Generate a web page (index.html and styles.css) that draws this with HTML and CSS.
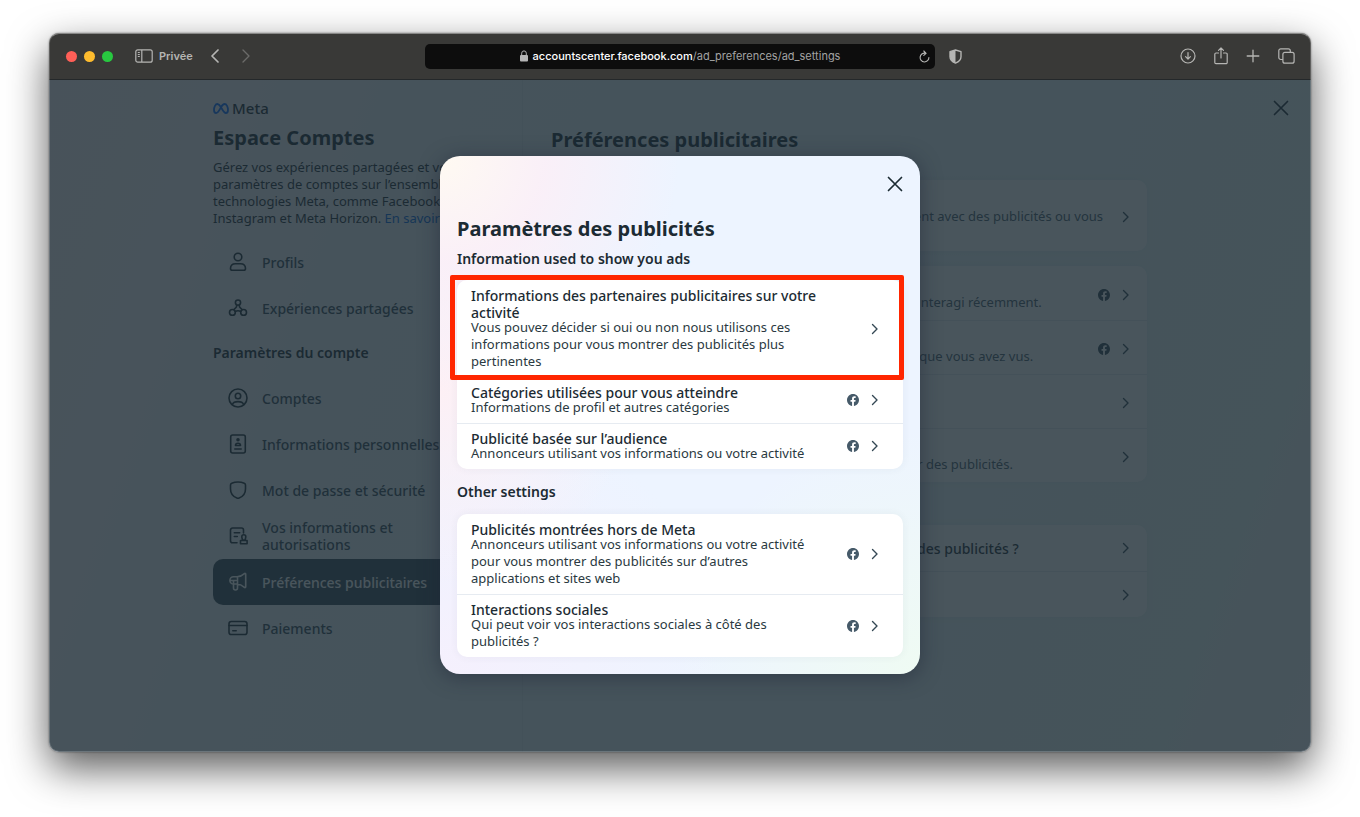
FILE: index.html
```
<!DOCTYPE html>
<html lang="fr">

<head>
  <meta charset="utf-8">
  <title>Préférences publicitaires</title>
  <meta name="viewport" content="width=device-width, initial-scale=1">
  <link rel="stylesheet" href="styles.css">
</head>

<body>

  <!-- Shared icons -->
  <svg class="sprite" aria-hidden="true">
    <symbol id="chevron" viewBox="0 0 10 12">
      <path d="M2.5 1.5 7 6 2.5 10.5" fill="none" stroke="currentColor" stroke-width="1.4" stroke-linecap="round" stroke-linejoin="round" />
    </symbol>
    <symbol id="cross" viewBox="0 0 16 16">
      <path d="M1.5 1.5l13 13M14.5 1.5l-13 13" fill="none" stroke="currentColor" stroke-width="1.7" stroke-linecap="round" />
    </symbol>
    <symbol id="facebook" viewBox="0 0 24 24">
      <path fill="currentColor" d="M24 12.07C24 5.4 18.63 0 12 0S0 5.4 0 12.07C0 18.1 4.39 23.1 10.13 24v-8.44H7.08v-3.49h3.05V9.41c0-3.02 1.79-4.69 4.53-4.69 1.31 0 2.68.24 2.68.24v2.97h-1.51c-1.49 0-1.95.93-1.95 1.88v2.26h3.32l-.53 3.49h-2.79V24C19.61 23.1 24 18.1 24 12.07z" />
    </symbol>
  </svg>

  <div class="window">

    <!-- Browser toolbar -->
    <header class="toolbar">
      <div class="toolbar-left">
        <div class="lights">
          <span class="light red"></span>
          <span class="light yellow"></span>
          <span class="light green"></span>
        </div>
        <button class="tool private" type="button">
          <svg width="18" height="14" viewBox="0 0 18 14" fill="none" stroke="currentColor">
            <rect x="0.8" y="0.8" width="16.4" height="12.4" rx="2" stroke-width="1.2" />
            <path d="M6.8 1v12" stroke-width="1.2" />
            <path d="M2.8 3.5h2M2.8 5.5h2M2.8 7.5h2" stroke-width="1" />
          </svg>
          Privée
        </button>
        <button class="tool" type="button" aria-label="Précédent">
          <svg width="8" height="14" viewBox="0 0 8 14" fill="none" stroke="currentColor" stroke-width="1.7" stroke-linecap="round" stroke-linejoin="round">
            <path d="M7 1 1 7l6 6" />
          </svg>
        </button>
        <button class="tool next" type="button" aria-label="Suivant" disabled>
          <svg width="8" height="14" viewBox="0 0 8 14" fill="none" stroke="currentColor" stroke-width="1.4" stroke-linecap="round" stroke-linejoin="round">
            <path d="M1 1l6 6-6 6" />
          </svg>
        </button>
      </div>

      <div class="address">
        <button class="url" type="button">
          <svg width="8" height="12" viewBox="0 0 8 12">
            <rect x="0" y="5" width="8" height="6.6" rx="1" fill="#b5b5b5" />
            <path d="M1.7 5.5V3.2a2.3 2.3 0 0 1 4.6 0v2.3" fill="none" stroke="#b5b5b5" stroke-width="1" />
          </svg>
          <span><span class="host">accountscenter.facebook.com</span>/ad_preferences/ad_settings</span>
        </button>
        <button class="tool reload" type="button" aria-label="Recharger">
          <svg width="11" height="13" viewBox="0 0 11 13" fill="none" stroke="currentColor" stroke-width="1.1" stroke-linecap="round" stroke-linejoin="round">
            <path d="M6.2 3.2A4.4 4.4 0 1 0 9.9 7.5M4.8 1l2.3 2.3L4.8 5.4" />
          </svg>
        </button>
      </div>

      <div class="toolbar-right">
        <button class="tool" type="button" aria-label="Confidentialité">
          <svg width="13" height="15" viewBox="0 0 13 15">
            <path d="M6.5 1 12 2.7v5c0 3-2.3 5-5.5 6.4C3.3 12.7 1 10.7 1 7.7v-5z" fill="none" stroke="currentColor" stroke-width="1.4" stroke-linejoin="round" />
            <path d="M6.5 1v13.1C3.3 12.7 1 10.7 1 7.7v-5z" fill="currentColor" />
          </svg>
        </button>
        <div class="tools">
          <button class="tool" type="button" aria-label="Téléchargements">
            <svg width="16" height="16" viewBox="0 0 16 16" fill="none" stroke="currentColor" stroke-width="1.2" stroke-linecap="round" stroke-linejoin="round">
              <circle cx="8" cy="8" r="7" />
              <path d="M8 4.5v6.5M5.6 8.7 8 11.1l2.4-2.4" />
            </svg>
          </button>
          <button class="tool" type="button" aria-label="Partager">
            <svg width="14" height="18" viewBox="0 0 14 18" fill="none" stroke="currentColor" stroke-width="1.2" stroke-linecap="round" stroke-linejoin="round">
              <path d="M4.5 6H2a1.2 1.2 0 0 0-1.2 1.2v8.3A1.2 1.2 0 0 0 2 16.7h10a1.2 1.2 0 0 0 1.2-1.2V7.2A1.2 1.2 0 0 0 12 6H9.5M7 11V1M4.5 3.3 7 .8l2.5 2.5" />
            </svg>
          </button>
          <button class="tool" type="button" aria-label="Nouvel onglet">
            <svg width="14" height="14" viewBox="0 0 14 14" fill="none" stroke="currentColor" stroke-width="1.3" stroke-linecap="round">
              <path d="M7 1.2v11.6M1.2 7h11.6" />
            </svg>
          </button>
          <button class="tool" type="button" aria-label="Onglets">
            <svg width="17" height="16" viewBox="0 0 17 16" fill="none" stroke="currentColor" stroke-width="1.2" stroke-linejoin="round">
              <rect x="4.9" y="4.4" width="11.2" height="10.8" rx="2" />
              <path d="M4.9 11.5H2.8a2 2 0 0 1-2-2V2.8a2 2 0 0 1 2-2h7.5a2 2 0 0 1 2 2v1.6" />
            </svg>
          </button>
        </div>
      </div>
    </header>

    <div class="page">
      <div class="layout">

        <!-- Left column -->
        <aside class="sidebar">
          <div class="brand">
            <svg width="16" height="11" viewBox="0 0 16 11" fill="none" stroke="#0a6cff" stroke-width="1.8" stroke-linecap="round" stroke-linejoin="round">
              <path d="M8 4.2C6.7 2 5.6 1 4.4 1 2.4 1 1 4 1 7c0 1.8.8 3 2.1 3C5.3 10 6.5 6.7 8 4.2 9.2 2 10.3 1 11.6 1 13.6 1 15 4 15 7c0 1.8-.8 3-2.1 3C10.8 10 9.5 6.7 8 4.2z" />
            </svg>
            <span>Meta</span>
          </div>
          <h1 class="title">Espace Comptes</h1>
          <p class="intro">Gérez vos expériences partagées et vos paramètres de comptes sur l’ensemble des technologies Meta, comme Facebook, Instagram et Meta Horizon. <a href="#">En savoir plus</a></p>

          <nav class="menu">
            <a class="item" href="#">
              <svg class="icon" viewBox="0 0 20 20"><circle cx="10" cy="5" r="3.8" /><path d="M2.5 16.5c0-3 2-4.8 5-4.8h5c3 0 5 1.8 5 4.8 0 1-.7 1.8-1.8 1.8H4.3c-1.1 0-1.8-.8-1.8-1.8z" /></svg>
              <span>Profils</span>
            </a>
            <a class="item" href="#">
              <svg class="icon" viewBox="0 0 20 20"><circle cx="10" cy="4.6" r="2.6" /><circle cx="4.4" cy="14.4" r="2.9" /><circle cx="15.6" cy="14.4" r="2.9" /><path d="M8.6 7v1.6c0 1.2-2 1.6-2.7 3M11.4 7v1.6c0 1.2 2 1.6 2.7 3M7.2 13.5c1.4-.8 4.2-.8 5.6 0" /></svg>
              <span>Expériences partagées</span>
            </a>
            <h2 class="menu-title">Paramètres du compte</h2>
            <a class="item" href="#">
              <svg class="icon" viewBox="0 0 20 20"><circle cx="10" cy="10" r="9" /><circle cx="10" cy="8" r="2.7" /><path d="M4.3 16.5c.8-2 2.5-2.9 5.7-2.9s4.9.9 5.7 2.9" /></svg>
              <span>Comptes</span>
            </a>
            <a class="item" href="#">
              <svg class="icon" viewBox="0 0 20 20"><rect x="2.7" y="1" width="14.6" height="18" rx="2" /><circle cx="10" cy="5.8" r="1" fill="#1c2b33" /><path d="M7.5 11.5c0-1.6 1-2.2 2.5-2.2s2.5.6 2.5 2.2zM6.8 15h6.4" /></svg>
              <span>Informations personnelles</span>
            </a>
            <a class="item" href="#">
              <svg class="icon" viewBox="0 0 20 20"><path d="M10 2c2.5 0 4.6.5 6.3 1.2.8.3 1.2 1 1.2 1.8v4c0 4.2-2.8 7.6-6.4 9-.7.3-1.5.3-2.2 0C5.3 16.6 2.5 13.2 2.5 9V5c0-.8.4-1.5 1.2-1.8C5.4 2.5 7.5 2 10 2z" /></svg>
              <span>Mot de passe et sécurité</span>
            </a>
            <a class="item" href="#">
              <svg class="icon" viewBox="0 0 20 20"><path d="M9 16.8H4.5a2 2 0 0 1-2-2V4a2 2 0 0 1 2-2h9a2 2 0 0 1 2 2v3M6.3 6.7h5.4M6.3 10.5h3" /><path d="M15.8 8.8a2 2 0 0 1 2 2c0 1.2-.6 1.6-.6 3.2h-2.8c0-1.6-.6-2-.6-3.2a2 2 0 0 1 2-2zM12.5 14.5h6.6v3.2h-6.6z" /></svg>
              <span>Vos informations et autorisations</span>
            </a>
            <a class="item active" href="#">
              <svg class="icon" viewBox="0 0 20 20"><path d="M9 4.8H5.5a3.6 3.6 0 0 0 0 7.2H9c3 0 5 1.2 7.4 3.4.6.5 1.3.2 1.3-.6V2.2c0-.8-.7-1.1-1.3-.6C14 3.8 12 4.8 9 4.8zM9.5 4.8V12M5.5 8.5V16a2 2 0 0 0 4 0v-4M2.5 8.5H8" /></svg>
              <span>Préférences publicitaires</span>
            </a>
            <a class="item" href="#">
              <svg class="icon" viewBox="0 0 20 20"><rect x="1" y="3.5" width="18" height="13" rx="2.3" /><path d="M1 7.5h18M4.8 12.8h3.4" /></svg>
              <span>Paiements</span>
            </a>
          </nav>
        </aside>

        <!-- Right column -->
        <main class="content">
          <h1 class="title">Préférences publicitaires</h1>

          <div class="card tall">
            <a class="row" href="#">
              <span class="text">
                <strong>Personnaliser vos publicités</strong>
                <small>Observez comment les choix, lorsque des gens interagissent avec des publicités ou vous suivent, comptent.</small>
              </span>
              <svg class="chevron"><use href="#chevron" /></svg>
            </a>
          </div>

          <div class="card tall">
            <a class="row" href="#">
              <span class="text">
                <strong>Activité publicitaire</strong>
                <small>Voir les publicités avec lesquelles vous ou vos profils avez interagi récemment.</small>
              </span>
              <svg class="facebook"><use href="#facebook" /></svg>
              <svg class="chevron"><use href="#chevron" /></svg>
            </a>
            <a class="row" href="#">
              <span class="text">
                <strong>Annonceurs vus</strong>
                <small>Les annonceurs dont les publicités disponibles sont celles que vous avez vus.</small>
              </span>
              <svg class="facebook"><use href="#facebook" /></svg>
              <svg class="chevron"><use href="#chevron" /></svg>
            </a>
            <a class="row" href="#">
              <span class="text">
                <strong>Thèmes publicitaires</strong>
                <small>Choisissez les thèmes des publicités.</small>
              </span>
              <svg class="chevron"><use href="#chevron" /></svg>
            </a>
            <a class="row" href="#">
              <span class="text">
                <strong>Paramètres des publicités</strong>
                <small>Vos informations personnelles utilisées pour vous montrer des publicités.</small>
              </span>
              <svg class="chevron"><use href="#chevron" /></svg>
            </a>
          </div>

          <h2 class="subtitle">En savoir plus</h2>

          <div class="card short">
            <a class="row" href="#">
              <span class="text"><strong>Comment et pourquoi Meta choisit de vous montrer des publicités ?</strong></span>
              <svg class="chevron"><use href="#chevron" /></svg>
            </a>
            <a class="row" href="#">
              <span class="text"><strong>Consulter les règles publicitaires</strong></span>
              <svg class="chevron"><use href="#chevron" /></svg>
            </a>
          </div>
        </main>
      </div>

      <button class="close page-close" type="button" aria-label="Fermer la page"><svg><use href="#cross" /></svg></button>

      <!-- Dimmed layer and ad settings dialog -->
      <div class="overlay">
        <dialog class="modal" open aria-labelledby="modal-title">
          <div class="modal-header">
            <button class="close" type="button" aria-label="Fermer"><svg><use href="#cross" /></svg></button>
          </div>
          <h2 class="title" id="modal-title">Paramètres des publicités</h2>
          <h3>Information used to show you ads</h3>
          <div class="card">
            <a class="row highlight" href="#">
              <span class="text">
                <strong>Informations des partenaires publicitaires sur votre activité</strong>
                <small>Vous pouvez décider si oui ou non nous utilisons ces informations pour vous montrer des publicités plus pertinentes</small>
              </span>
              <svg class="chevron"><use href="#chevron" /></svg>
            </a>
            <a class="row" href="#">
              <span class="text">
                <strong>Catégories utilisées pour vous atteindre</strong>
                <small>Informations de profil et autres catégories</small>
              </span>
              <svg class="facebook"><use href="#facebook" /></svg>
              <svg class="chevron"><use href="#chevron" /></svg>
            </a>
            <a class="row" href="#">
              <span class="text">
                <strong>Publicité basée sur l’audience</strong>
                <small>Annonceurs utilisant vos informations ou votre activité</small>
              </span>
              <svg class="facebook"><use href="#facebook" /></svg>
              <svg class="chevron"><use href="#chevron" /></svg>
            </a>
          </div>

          <h3 class="other">Other settings</h3>
          <div class="card">
            <a class="row" href="#">
              <span class="text">
                <strong>Publicités montrées hors de Meta</strong>
                <small>Annonceurs utilisant vos informations ou votre activité pour vous montrer des publicités sur d’autres applications et sites web</small>
              </span>
              <svg class="facebook"><use href="#facebook" /></svg>
              <svg class="chevron"><use href="#chevron" /></svg>
            </a>
            <a class="row" href="#">
              <span class="text">
                <strong>Interactions sociales</strong>
                <small>Qui peut voir vos interactions sociales à côté des publicités&nbsp;?</small>
              </span>
              <svg class="facebook"><use href="#facebook" /></svg>
              <svg class="chevron"><use href="#chevron" /></svg>
            </a>
          </div>
        </dialog>
      </div>
    </div>

  </div>

</body>

</html>
```
FILE: styles.css
```
* {
  box-sizing: border-box;
}

body {
  margin: 0;
  min-height: 100vh;
  padding: 33px 49px 65px;
  display: flex;
  background-color: #fff;
  color: #1c2b33;
  font-family: "Noto Sans", "Open Sans", sans-serif;
  font-size: 13px;
  line-height: 17px;
}

a {
  color: inherit;
  text-decoration: none;
}

button {
  padding: 0;
  border: 0;
  background: none;
  color: inherit;
  font: inherit;
  cursor: pointer;
}

h1,
h2,
h3,
p {
  margin: 0;
}

svg {
  display: block;
  flex: none;
}

.sprite {
  display: none;
}

/* Browser window */
.window {
  flex: 1;
  min-width: 0;
  display: flex;
  flex-direction: column;
  position: relative;
  border-radius: 10px;
  overflow: hidden;
  box-shadow: 0 0 2px rgba(0, 0, 0, 0.5), 0 16px 40px rgba(0, 0, 0, 0.65);
}

.window::after {
  content: "";
  position: absolute;
  inset: 0;
  border: 1px solid rgba(255, 255, 255, 0.2);
  border-top-color: rgba(255, 255, 255, 0.4);
  border-radius: 10px;
  pointer-events: none;
}

.toolbar {
  height: 47px;
  display: grid;
  grid-template-columns: 1fr minmax(0, 510px) 1fr;
  align-items: center;
  border-bottom: 1px solid #24282a;
  background-color: #393937;
  color: #b5b5b3;
  font-family: Inter, sans-serif;
  font-size: 11px;
}

.toolbar-left {
  display: flex;
  align-items: center;
  gap: 18px;
  padding-left: 17px;
}

.lights {
  display: flex;
  gap: 7px;
  margin-right: 4px;
}

.light {
  width: 11px;
  height: 11px;
  border-radius: 50%;
}

.red {
  background-color: #ff5f57;
}

.yellow {
  background-color: #febc2e;
}

.green {
  background-color: #28c840;
}

.tool {
  display: flex;
  align-items: center;
}

.private {
  gap: 6px;
  font-weight: 600;
}

.next {
  margin-left: 5px;
  color: #6b6b69;
}

.address {
  height: 25px;
  display: flex;
  align-items: center;
  padding: 0 5px;
  border-radius: 5px;
  background-color: #0d0d0d;
}

.url {
  flex: 1;
  min-width: 0;
  display: flex;
  align-items: center;
  justify-content: center;
  gap: 5px;
  padding-left: 11px;
  color: #a3a3a3;
}

.host {
  color: #fff;
  font-weight: 500;
}

.toolbar-right {
  display: flex;
  align-items: center;
  justify-content: space-between;
  padding: 0 16px 0 14px;
}

.tools {
  display: flex;
  align-items: center;
  gap: 18px;
}

/* Page behind the dialog */
.page {
  flex: 1;
  display: flex;
  position: relative;
  background-image: linear-gradient(110deg, #faf1f4 0%, #f7f3f8 14%, #edf4fa 28%, #eaf4fa 55%, #ecf7f4 90%, #f3f2f7 100%);
}

.layout {
  flex: 1;
  display: flex;
  max-width: 934px;
  margin: 0 auto;
}

.sidebar {
  flex: 0 0 310px;
  padding: 20px 17px 0 0;
  border-right: 1px solid #e1e8f0;
}

.brand {
  display: flex;
  align-items: center;
  gap: 3px;
  font-size: 15px;
  font-weight: 500;
}

.title {
  font-size: 20px;
  font-weight: 700;
  line-height: 26px;
}

.sidebar .title {
  margin: 8px 0;
}

.intro a {
  color: #0064e0;
}

.menu {
  margin-top: 12px;
}

.item {
  height: 46px;
  display: flex;
  align-items: center;
  gap: 14px;
  padding: 0 36px 0 15px;
  border-radius: 10px;
  color: #344854;
  font-size: 14px;
  font-weight: 500;
}

.icon {
  width: 20px;
  height: 20px;
  fill: none;
  stroke: #1c2b33;
  stroke-width: 1.6;
  stroke-linecap: round;
  stroke-linejoin: round;
}

.item.active {
  background-color: #344854;
  color: #fff;
}

.active .icon {
  stroke: #fff;
}

.menu-title {
  padding: 13px 0 14px;
  font-size: 14px;
  font-weight: 600;
}

.content {
  flex: 1;
  min-width: 0;
  padding: 47px 0 0 28px;
}

.content .title {
  margin-bottom: 27px;
}

.content .card {
  margin-bottom: 15px;
}

.subtitle {
  margin-bottom: 11px;
  font-size: 14px;
  font-weight: 600;
}

.close {
  width: 16px;
  height: 16px;
}

.close svg {
  width: 16px;
  height: 16px;
}

.page-close {
  position: absolute;
  top: 20px;
  right: 22px;
}

/* Cards and their rows */
.card {
  border-radius: 10px;
  background-color: #fff;
  box-shadow: 0 0 8px rgba(52, 72, 84, 0.06);
}

.row {
  display: flex;
  align-items: center;
  gap: 11px;
  position: relative;
  padding: 7px 23px 7px 14px;
}

.row + .row {
  padding-top: 6px;
  border-top: 1px solid #e6ebf1;
}

.tall .row {
  padding: 12px 16px 9px 14px;
}

.tall .row + .row {
  padding-top: 11px;
}

.short .row {
  height: 46px;
  padding: 0 16px 0 14px;
}

.text {
  flex: 1;
  min-width: 0;
}

.text strong,
.text small {
  display: block;
}

.text strong {
  font-size: 14px;
  font-weight: 500;
}

.text small {
  margin-top: -2px;
  font-size: 13px;
}

.tall .text small {
  margin-top: -1px;
  color: #465a69;
}

.chevron {
  width: 10px;
  height: 12px;
  color: #344854;
}

.facebook {
  width: 12px;
  height: 12px;
  color: #344854;
}

/* Dialog */
.overlay {
  position: absolute;
  inset: 0;
  display: flex;
  align-items: center;
  justify-content: center;
  padding-bottom: 2px;
  background-color: rgba(28, 43, 51, 0.8);
}

.modal {
  position: static;
  width: 480px;
  max-width: 100%;
  margin: 0;
  padding: 0 17px 17px;
  border: 0;
  border-radius: 20px;
  color: inherit;
  background-color: #edf4ff;
  background-image:
    radial-gradient(circle at 0 0, #fffaf2 0, rgba(251, 239, 247, 0.9) 15%, rgba(237, 244, 255, 0) 34%),
    radial-gradient(circle at 0 45%, #fdf0f5 0, rgba(253, 240, 245, 0) 35%),
    radial-gradient(circle at 0 100%, #f5f0fd 0, rgba(245, 240, 253, 0) 40%),
    radial-gradient(circle at 100% 100%, #effbf3 0, rgba(239, 251, 243, 0) 35%);
  box-shadow: 0 3px 20px rgba(28, 34, 51, 0.5);
}

.modal-header {
  display: flex;
  justify-content: flex-end;
  padding: 20px 0 24px;
}

.modal h3 {
  margin: 8px 0 13px;
  font-size: 14px;
  font-weight: 600;
}

.modal .other {
  margin: 14px 0;
}

.modal .text {
  padding-right: 16px;
}

.modal small {
  color: #2a3941;
}

.modal .facebook {
  color: #465a69;
}

/* Red frame round the selected setting */
.highlight::after {
  content: "";
  position: absolute;
  z-index: 1;
  inset: -5px -1px -3px -7px;
  border: 5px solid #ff2600;
  border-radius: 2px;
}
```
